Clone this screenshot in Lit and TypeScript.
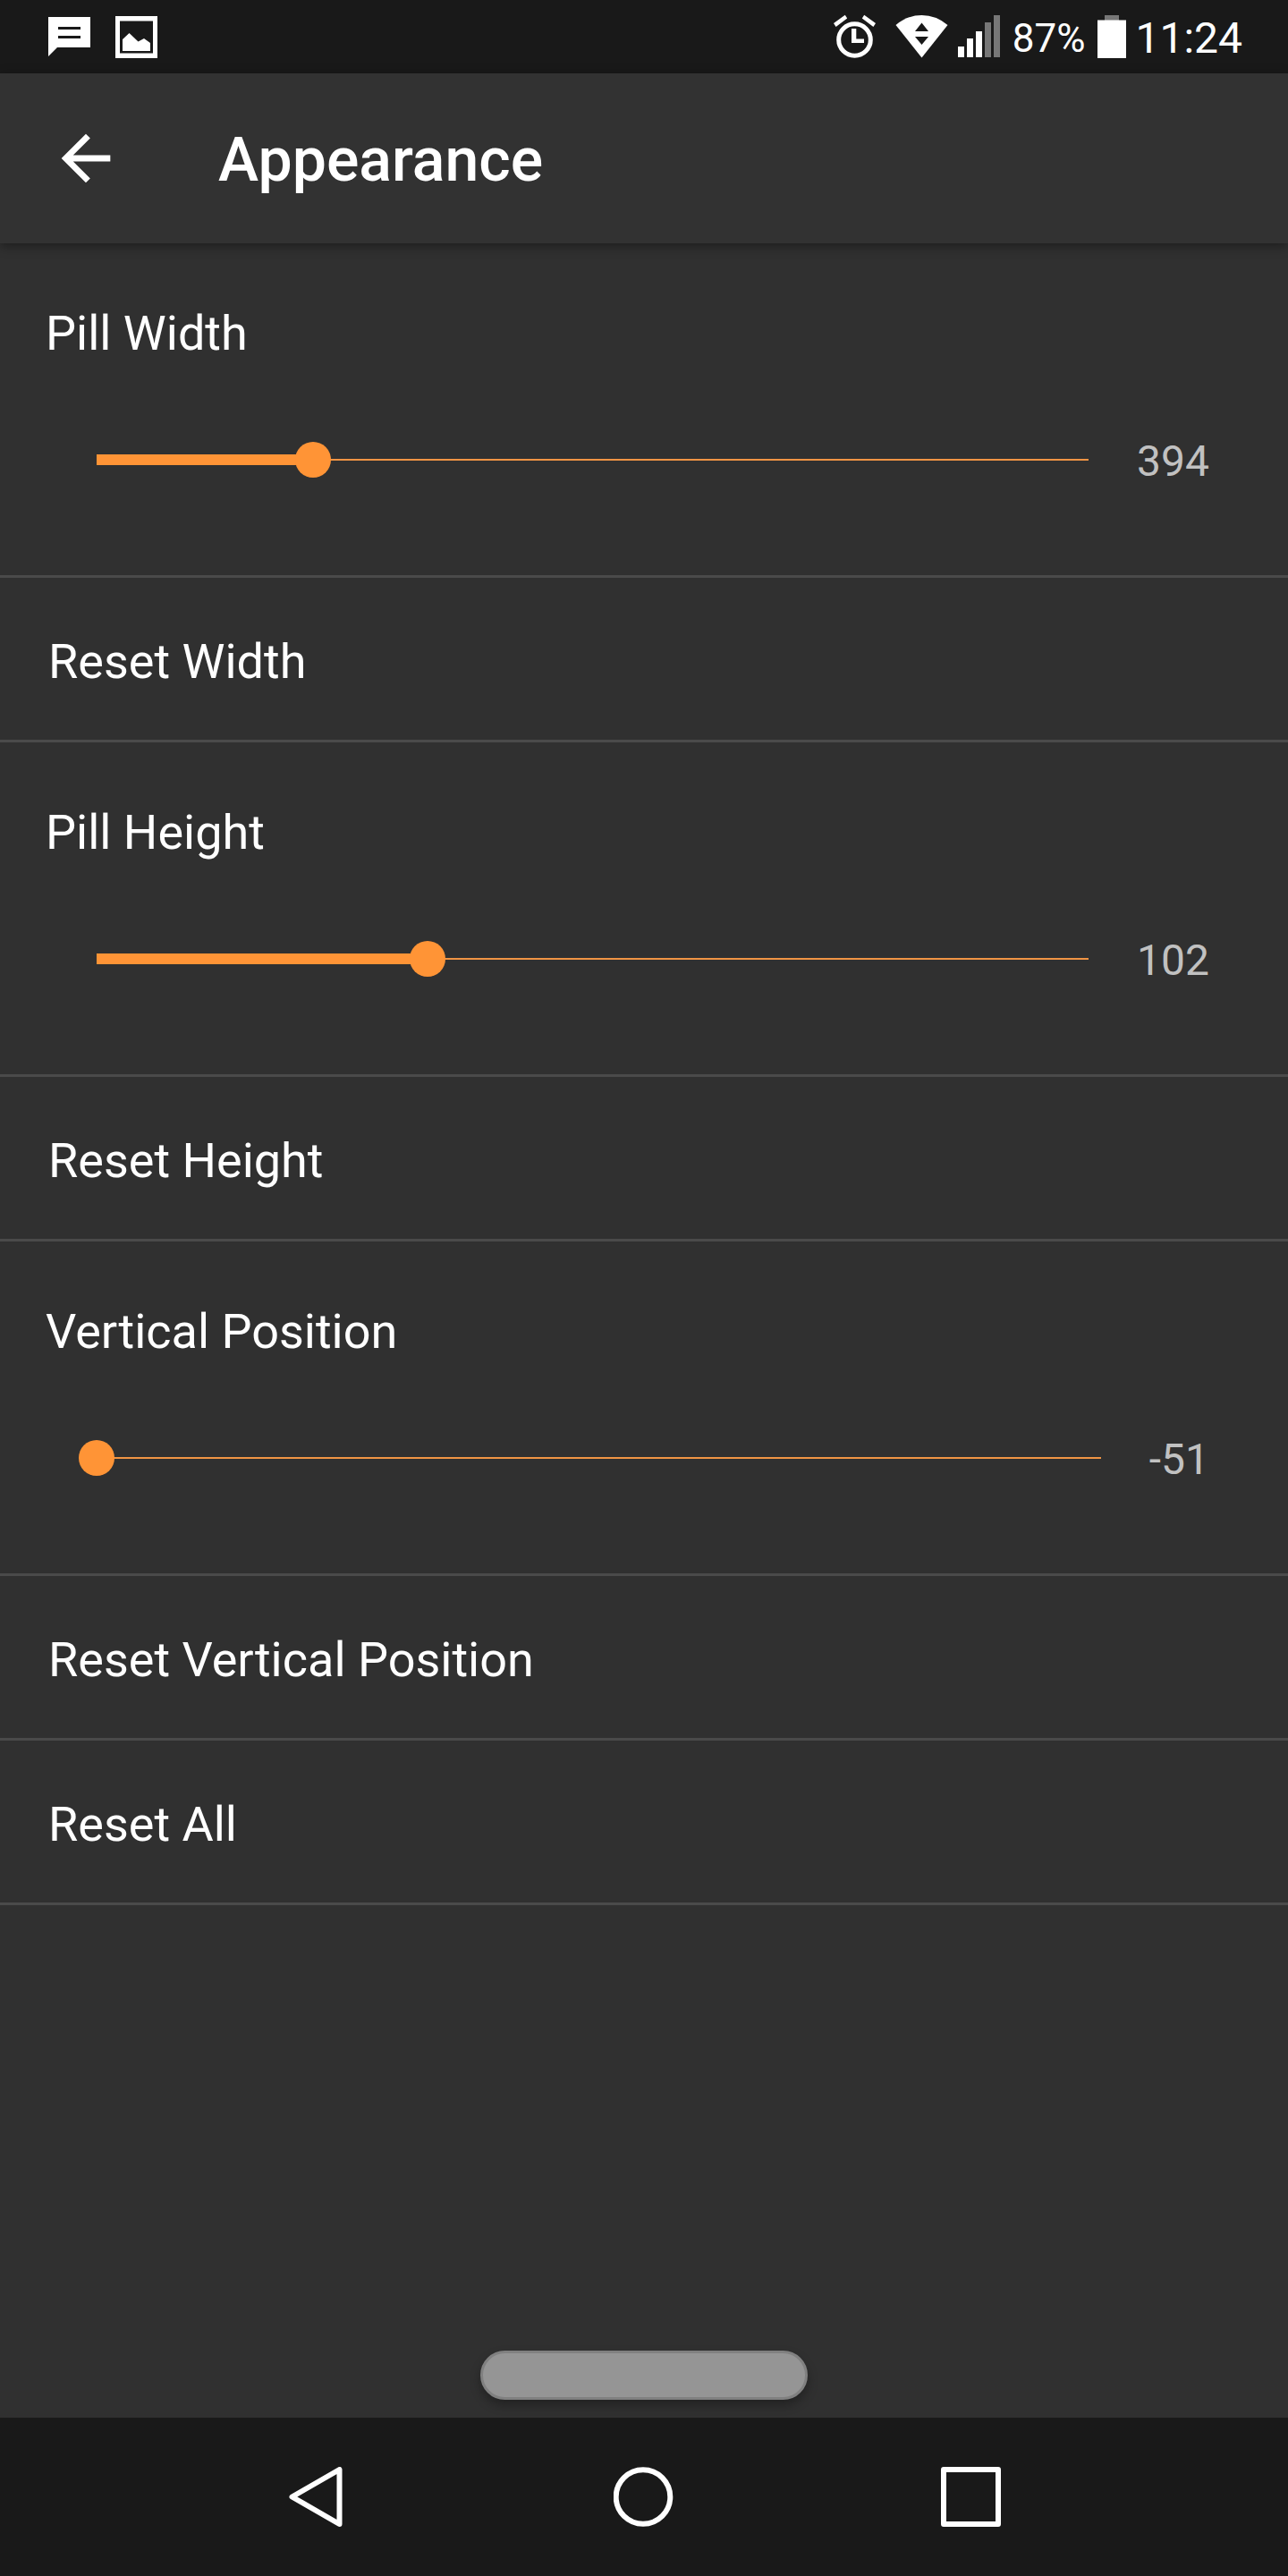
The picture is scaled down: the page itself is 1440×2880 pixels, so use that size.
import { LitElement, html, css, svg } from "lit";
import { customElement, property, state } from "lit/decorators.js";
import { styleMap } from "lit/directives/style-map.js";

@customElement("status-bar")
class StatusBar extends LitElement {
  static styles = css`
    :host {
      display: flex;
      align-items: center;
      justify-content: space-between;
      height: 82px;
      padding: 0 51px 0 54px;
      background: #191919;
      color: #fff;
    }
    .group {
      display: flex;
      align-items: center;
    }
    .notices {
      gap: 28px;
    }
    svg {
      display: block;
      flex: none;
      fill: currentColor;
    }
    .dim {
      fill: #777;
    }
    .ink {
      fill: #191919;
    }
    .wifi {
      margin-left: 22px;
    }
    .signal {
      margin-left: 11px;
    }
    .percent,
    .clock {
      padding-top: 3px;
      line-height: 56px;
    }
    .percent {
      margin-left: 13px;
      font-size: 44px;
    }
    .battery {
      margin-left: 14px;
    }
    .clock {
      margin-left: 10px;
      font-size: 48px;
    }
  `;

  render() {
    return html`
      <div class="group notices">
        <svg width="47" height="48" viewBox="0 0 47 48" role="img" aria-label="New message">
          <path d="M0 2H47V36H10L0 46Z" />
          <path class="ink" d="M11 13H36V16H11ZM11 23H36V26H11Z" />
        </svg>
        <svg width="47" height="48" viewBox="0 0 47 48" role="img" aria-label="Screenshot saved">
          <path fill-rule="evenodd" d="M0 1H47V48H0ZM5 6.500V42.500H42V6.500Z" />
          <path d="M8 40V27L15.500 20L25.500 29.500L32 26L39 31V40Z" />
        </svg>
      </div>
      <div class="group">
        <svg width="47" height="50" viewBox="0 0 47 50" role="img" aria-label="Alarm set">
          <circle cx="23.500" cy="28.500" r="17.800" fill="none" stroke="currentColor" stroke-width="5" />
          <path d="M20 16H25.300V27.500H34V32H20Z" />
          <path d="M0 10L12.800 .7L15.200 4.500L2.600 14ZM47 10L34.200 .7L31.800 4.500L44.400 14Z" />
        </svg>
        <svg class="wifi" width="59" height="50" viewBox="0 0 59 50" role="img" aria-label="Wi-Fi">
          <path d="M.5 12Q13.500 1 29.500 1T58.500 12L29.500 48.500Z" />
          <path class="ink" d="M22 19L29.500 9.500L37 19ZM22 25H37L29.500 34Z" />
        </svg>
        <svg class="signal" width="48" height="50" viewBox="0 0 48 50" role="img" aria-label="Signal 3 of 5">
          <path d="M0 36H7V48H0ZM10 27H17V48H10ZM20 19H27V48H20Z" />
          <path class="dim" d="M30 9H37V48H30ZM40 1H47V48H40Z" />
        </svg>
        <span class="percent">87%</span>
        <svg class="battery" width="32" height="50" viewBox="0 0 32 50" role="img" aria-label="Battery">
          <path class="dim" d="M8 1H24V7H8Z" />
          <path d="M0 6.500H32V49H0Z" />
        </svg>
        <span class="clock">11:24</span>
      </div>
    `;
  }
}

@customElement("slider-preference")
class SliderPreference extends LitElement {
  @property() label = "";
  @property({ type: Number }) min = 0;
  @property({ type: Number }) max = 100;
  @property({ type: Number }) value = 0;

  static styles = css`
    :host {
      display: block;
      padding: 69px 0 97px;
      border-bottom: 3px solid #4a4a4a;
    }
    .label {
      display: block;
      padding: 0 51px;
      font-size: 54px;
      line-height: 64px;
      color: #fff;
    }
    .control {
      display: flex;
      align-items: center;
      gap: 34px;
      height: 64px;
      margin-top: 77px;
      padding: 0 88px;
    }
    .value {
      padding-top: 3px;
      font-size: 48px;
      line-height: 64px;
      color: #c1c1c1;
    }
    .slider {
      appearance: none;
      flex: 1;
      min-width: 0;
      height: 40px;
      margin: 0;
      background: none;
      cursor: pointer;
    }
    .slider::-webkit-slider-runnable-track {
      height: 40px;
      background:
        linear-gradient(#ff9436, #ff9436) 20px center / calc((100% - 40px) * var(--fill)) 12px no-repeat,
        linear-gradient(#f09444, #f09444) 20px center / calc(100% - 40px) 2px no-repeat;
    }
    .slider::-webkit-slider-thumb {
      appearance: none;
      width: 40px;
      height: 40px;
      border-radius: 50%;
      background: #ff9436;
    }
  `;

  private onInput(e: Event) {
    const value = Number((e.target as HTMLInputElement).value);
    this.dispatchEvent(new CustomEvent("value-change", { detail: value }));
  }

  render() {
    const fill = (this.value - this.min) / (this.max - this.min);
    return html`
      <label class="label" for="slider">${this.label}</label>
      <div class="control">
        <input
          id="slider"
          class="slider"
          type="range"
          min=${this.min}
          max=${this.max}
          .value=${String(this.value)}
          style=${styleMap({ "--fill": String(fill) })}
          @input=${this.onInput}
        />
        <output class="value" for="slider">${this.value}</output>
      </div>
    `;
  }
}

@customElement("navigation-bar")
class NavigationBar extends LitElement {
  static styles = css`
    :host {
      display: flex;
      justify-content: center;
      height: 177px;
      background: #191919;
    }
    .key {
      display: flex;
      flex: 0 1 366px;
      align-items: center;
      justify-content: center;
      padding: 0;
      border: 0;
      background: none;
      color: #fff;
      cursor: pointer;
    }
    svg {
      display: block;
      fill: none;
      stroke: currentColor;
      stroke-width: 6;
      stroke-linejoin: round;
    }
  `;

  private key(label: string, shape: unknown) {
    return html`<button class="key" type="button" aria-label=${label}>
      <svg width="68" height="68" viewBox="0 0 68 68">${shape}</svg>
    </button>`;
  }

  render() {
    return html`
      ${this.key("Back", svg`<path d="M6.500 33.500L59.500 3V64Z" />`)}
      ${this.key("Home", svg`<circle cx="33" cy="33.500" r="30.300" />`)}
      ${this.key("Recent apps", svg`<rect x="3" y="3" width="61" height="61" />`)}
    `;
  }
}

interface Setting {
  key: string;
  label: string;
  reset: string;
  min: number;
  max: number;
  initial: number;
}

const SETTINGS: Setting[] = [
  { key: "width", label: "Pill Width", reset: "Reset Width", min: 102, max: 1440, initial: 394 },
  { key: "height", label: "Pill Height", reset: "Reset Height", min: 34, max: 238, initial: 102 },
  { key: "y", label: "Vertical Position", reset: "Reset Vertical Position", min: -51, max: 204, initial: -51 },
];

const defaults = () => Object.fromEntries(SETTINGS.map((s) => [s.key, s.initial]));

@customElement("app-root")
class AppRoot extends LitElement {
  @state() private values: Record<string, number> = defaults();

  static styles = css`
    :host {
      display: flex;
      flex-direction: column;
      min-height: 100vh;
      background: #303030;
      color: #fff;
      font-family: Roboto, "Liberation Sans", sans-serif;
    }
    .toolbar {
      display: flex;
      align-items: center;
      gap: 107px;
      height: 190px;
      padding: 0 55px;
      background: #323232;
      box-shadow: 0 3px 12px rgba(0, 0, 0, 0.4);
    }
    .back {
      display: block;
      padding: 0;
      border: 0;
      background: none;
      color: #fff;
      cursor: pointer;
    }
    .back svg {
      display: block;
      fill: currentColor;
    }
    .title {
      margin: 0;
      padding-top: 4px;
      font-size: 68px;
      line-height: 80px;
      font-weight: 500;
    }
    .list {
      flex: 1;
    }
    .action {
      display: block;
      width: 100%;
      padding: 62px 54px 55px;
      border: 0;
      border-bottom: 3px solid #4a4a4a;
      background: none;
      color: #fff;
      font: inherit;
      font-size: 54px;
      line-height: 64px;
      text-align: left;
      cursor: pointer;
    }
    .pill {
      box-sizing: border-box;
      align-self: center;
      width: 366px;
      height: 55px;
      margin: 20px 0;
      padding: 0;
      border: 3px solid #808080;
      border-radius: 28px;
      background: #959595;
      box-shadow: 0 6px 12px rgba(0, 0, 0, 0.3);
    }
  `;

  private set(key: string, value: number) {
    this.values = { ...this.values, [key]: value };
  }

  render() {
    return html`
      <status-bar></status-bar>
      <header class="toolbar">
        <button class="back" type="button" aria-label="Navigate up">
          <svg width="82" height="82" viewBox="0 0 24 24">
            <path d="M20 11H7.830l5.590-5.590L12 4l-8 8 8 8 1.410-1.410L7.830 13H20v-2z" />
          </svg>
        </button>
        <h1 class="title">Appearance</h1>
      </header>
      <main class="list">
        ${SETTINGS.map(
          (s) => html`
            <slider-preference
              .label=${s.label}
              .min=${s.min}
              .max=${s.max}
              .value=${this.values[s.key]}
              @value-change=${(e: CustomEvent<number>) => this.set(s.key, e.detail)}
            ></slider-preference>
            <button class="action" type="button" @click=${() => this.set(s.key, s.initial)}>${s.reset}</button>
          `,
        )}
        <button class="action" type="button" @click=${() => (this.values = defaults())}>Reset All</button>
      </main>
      <button class="pill" type="button" aria-label="Navigation pill"></button>
      <navigation-bar></navigation-bar>
    `;
  }
}
